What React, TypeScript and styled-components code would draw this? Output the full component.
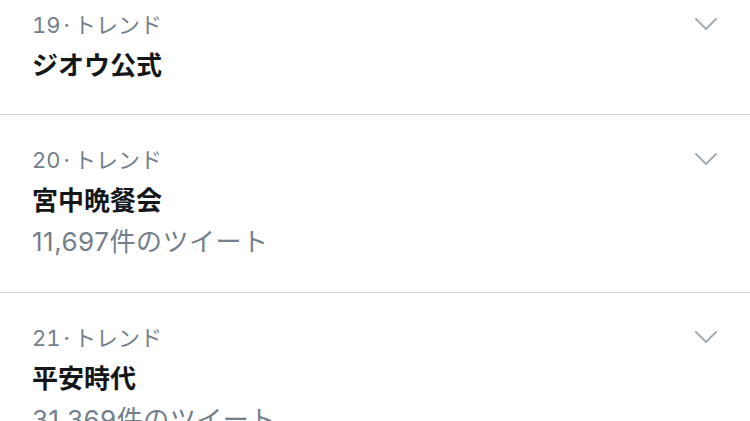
import React from "react";
import styled, { createGlobalStyle } from "styled-components";

const Global = createGlobalStyle`
  html, body { margin: 0; padding: 0; background: #ffffff; overflow: hidden; }
  body { font-family: "Inter", "Noto Sans CJK JP", sans-serif; }
`;

const List = styled.div`
  display: flex;
  flex-direction: column;
  margin-top: -20px;
  width: 750px;
`;

const Row = styled.div`
  display: flex;
  align-items: flex-start;
  justify-content: space-between;
  padding: 32px 33px 33px 32px;
  border-bottom: 1px solid #d0d0d4;
`;

const Content = styled.div`
  display: flex;
  flex-direction: column;
`;

const Label = styled.div`
  font-size: 22px;
  line-height: 26px;
  color: #737f8a;
  font-variant-numeric: tabular-nums;
`;

const Dot = styled.span`
  margin: 0 4px 0 3px;
`;

const Title = styled.div`
  margin-top: 9px;
  font-family: "Noto Sans CJK JP", sans-serif;
  font-size: 26px;
  line-height: 34px;
  font-weight: 700;
  color: #14171a;
`;

const Count = styled.div`
  margin-top: 9px;
  font-size: 26px;
  line-height: 34px;
  letter-spacing: 0.5px;
  color: #737f8a;
`;

const Chevron = styled.svg`
  margin-top: 6px;
  flex: none;
`;

type Trend = { rank: number; name: string; count?: string };

const trends: Trend[] = [
  { rank: 19, name: "ジオウ公式" },
  { rank: 20, name: "宮中晩餐会", count: "11,697件のツイート" },
  { rank: 21, name: "平安時代", count: "31,369件のツイート" },
];

export default function App() {
  return (
    <>
      <Global />
      <List>
        {trends.map((t) => (
          <Row key={t.rank}>
            <Content>
              <Label>
                {t.rank}
                <Dot>·</Dot>トレンド
              </Label>
              <Title>{t.name}</Title>
              {t.count && <Count>{t.count}</Count>}
            </Content>
            <Chevron width="22" height="12" viewBox="0 0 22 12">
              <polyline
                points="1,1 11,11 21,1"
                fill="none"
                stroke="#a4adb6"
                strokeWidth="2"
                strokeLinecap="round"
                strokeLinejoin="round"
              />
            </Chevron>
          </Row>
        ))}
      </List>
    </>
  );
}
